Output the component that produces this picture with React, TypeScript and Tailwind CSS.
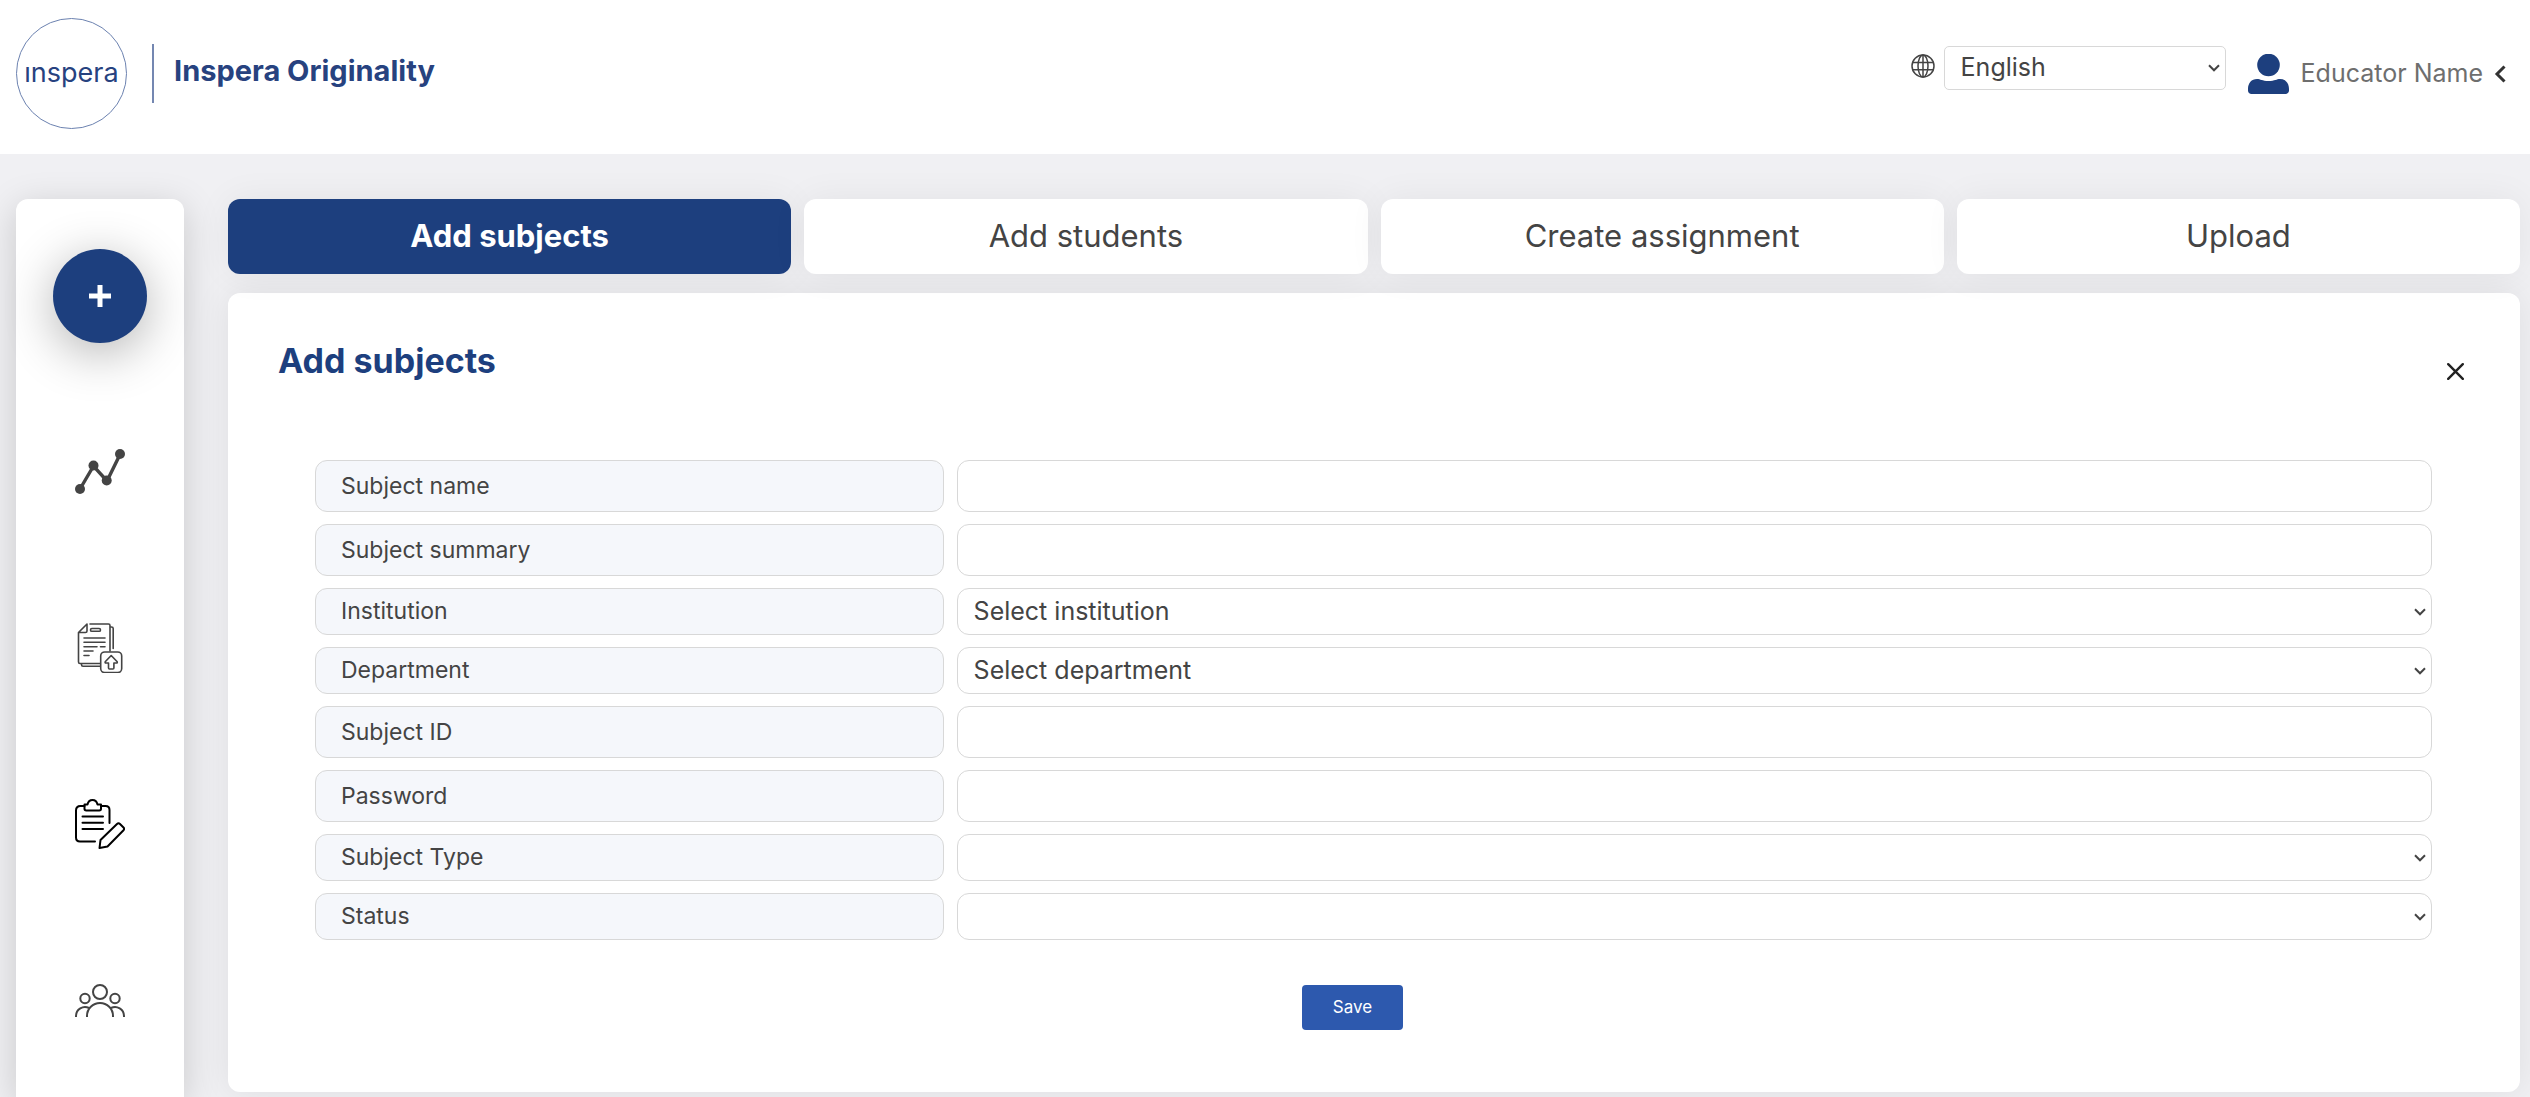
import type { ReactNode } from "react";

const tabs = ["Add subjects", "Add students", "Create assignment", "Upload"];

type Field = {
  id: string;
  label: string;
  type: "text" | "password" | "select";
  placeholder?: string;
};

const fields: Field[] = [
  { id: "name", label: "Subject name", type: "text" },
  { id: "summary", label: "Subject summary", type: "text" },
  { id: "institution", label: "Institution", type: "select", placeholder: "Select institution" },
  { id: "department", label: "Department", type: "select", placeholder: "Select department" },
  { id: "subject-id", label: "Subject ID", type: "text" },
  { id: "password", label: "Password", type: "password" },
  { id: "subject-type", label: "Subject Type", type: "select" },
  { id: "status", label: "Status", type: "select" },
];

function Logo() {
  return (
    <a href="#" className="flex items-center text-[#27427f]">
      <span className="flex size-[111px] items-center justify-center rounded-full border border-[#6c82b0] text-[27px]">
        ınspera
      </span>
      <span className="ml-[25px] h-[59px] w-[2px] bg-[#7487b1]"></span>
      <span className="ml-5 pb-1.5 text-[29px] font-bold">Inspera Originality</span>
    </a>
  );
}

function GlobeIcon() {
  return (
    <svg viewBox="0 0 24 24" className="size-6" fill="none" stroke="#444" strokeWidth="1.5">
      <circle cx="12" cy="12" r="11" />
      <ellipse cx="12" cy="12" rx="5" ry="11" />
      <path d="M12 1v22M1.600 8.500h20.800M1.600 15.800h20.800" />
    </svg>
  );
}

function UserIcon() {
  return (
    <svg viewBox="0 0 41 40" className="h-10 w-[41px]" fill="#1d3f7e">
      <circle cx="20.500" cy="11" r="11.300" />
      <path d="M0 35c0-6 3.500-10 9-10 3.500 0 5 2 11.500 2s8-2 11.500-2c5.500 0 9 4 9 10v1.500c0 2-1.500 3.500-3.500 3.500h-34C1.500 40 0 38.500 0 36.500z" />
    </svg>
  );
}

function ChartIcon() {
  return (
    <svg viewBox="0 0 50 50" className="size-[50px]" fill="#444">
      <path d="M5 42 18.500 19 32 34 45 7.500" fill="none" stroke="#444" strokeWidth="3.400" />
      <circle cx="5" cy="42" r="5" />
      <circle cx="18.500" cy="18.500" r="5" />
      <circle cx="31.700" cy="33.500" r="5" />
      <circle cx="45" cy="7" r="5" />
    </svg>
  );
}

function UploadDocIcon() {
  return (
    <svg viewBox="0 0 50 50" className="size-[50px]" fill="none" stroke="#444" strokeWidth="1.6" strokeLinecap="round" strokeLinejoin="round">
      <path d="M15 1h18.500q1.500 0 1.500 1.500V28M25 40.500H5q-1.500 0-1.500-1.500V9.500L12 1v7q0 1.500-1.500 1.500h-7" />
      <path d="M35.500 4h1q1.700 0 1.700 1.500v20M6.500 41v.8q0 1.400 1.500 1.400h17.500" />
      <rect x="15.500" y="5.500" width="10" height="2.800" rx="1.400" />
      <path d="M9 15h21M9 19.300h21M9 23.700h13M25.500 23.700H30M9 28h9M9 32.500h5" />
      <rect x="25.700" y="29" width="21" height="20.500" rx="4" fill="#fff" />
      <path d="m36.200 32.500-6 6.300q-.4 1.200.8 1.200h2.500v5q0 1 1 1h3.400q1 0 1-1v-5h2.500q1.200 0 .8-1.200z" />
    </svg>
  );
}

function ClipboardIcon() {
  return (
    <svg viewBox="0 0 50 50" className="size-[50px]" fill="none" stroke="#000" strokeWidth="2" strokeLinecap="round" strokeLinejoin="round">
      <path d="M9.500 7H5.500Q1 7 1 11.500v27Q1 42.500 5 42.500h15M26 7h4.500q4 0 4 4v13" />
      <path d="M9.500 5.500h3q1-4.500 5-4.500t5 4.500h3.500v4.300q0 1.700-1.700 1.700H11.200q-1.700 0-1.700-1.700z" />
      <path d="M7.500 17.500H28M7.500 23.800H28M7.500 30H28" />
      <path d="m24.500 49 1-8L42 25q1.500-1.500 3 0l3.500 3.500q1.300 1.300 0 2.700L32.500 47.500z" />
    </svg>
  );
}

function PeopleIcon() {
  return (
    <svg viewBox="0 0 50 50" className="size-[50px]" fill="none" stroke="#444" strokeWidth="2">
      <circle cx="25" cy="17" r="7" />
      <circle cx="10" cy="23.500" r="4.700" />
      <circle cx="40" cy="23.500" r="4.700" />
      <path d="M12 42v-1a13 13 0 0 1 26 0v1M1 42v-1a9 9 0 0 1 13-8M49 42v-1a9 9 0 0 0-13-8" />
    </svg>
  );
}

function NavItem({ label, children }: { label: string; children: ReactNode }) {
  return (
    <a href="#" aria-label={label} className="flex h-44 items-center justify-center">
      {children}
    </a>
  );
}

function Sidebar() {
  return (
    <nav className="w-[168px] shrink-0 rounded-t-xl bg-white pt-[9px] shadow-[0_8px_36px_rgba(0,0,0,0.17)]">
      <div className="flex h-44 items-center justify-center">
        <button
          type="button"
          aria-label="Add"
          className="flex size-[94px] items-center justify-center rounded-full bg-[#1d3f7e] shadow-[0_10px_50px_rgba(0,0,0,0.3)]"
        >
          <svg viewBox="0 0 22 22" className="size-[22px]" stroke="#fff" strokeWidth="5">
            <path d="M11 0v22M0 11h22" />
          </svg>
        </button>
      </div>
      <NavItem label="Reports"><ChartIcon /></NavItem>
      <NavItem label="Submissions"><UploadDocIcon /></NavItem>
      <NavItem label="Assignments"><ClipboardIcon /></NavItem>
      <NavItem label="Students"><PeopleIcon /></NavItem>
    </nav>
  );
}

// select without the browser arrow, with our own chevron over its right edge
function Select({ id, label, option, className }: { id: string; label?: string; option?: string; className: string }) {
  return (
    <div className="relative flex">
      <select
        id={id}
        aria-label={label}
        className={`w-full appearance-none border border-[#d8d8d8] bg-white pr-8 pl-4 text-[25px] text-[#444] ${className}`}
      >
        <option>{option}</option>
      </select>
      <svg
        viewBox="0 0 12 8"
        className="pointer-events-none absolute top-1/2 right-1.5 h-2 w-3 -translate-y-1/2"
        fill="none"
        stroke="#444"
        strokeWidth="2"
      >
        <path d="M1 1.300 6 6.300l5-5" />
      </svg>
    </div>
  );
}

function FieldRow({ field }: { field: Field }) {
  const isSelect = field.type === "select";
  return (
    <div className={`grid grid-cols-[628fr_1474fr] gap-[13px] ${isSelect ? "h-[47px]" : "h-[52px]"}`}>
      <label
        htmlFor={field.id}
        className="flex items-center rounded-xl border border-[#d8d8d8] bg-[#f5f7fb] pl-[25px] text-[23px] text-[#444]"
      >
        {field.label}
      </label>
      {isSelect ? (
        <Select id={field.id} option={field.placeholder} className="rounded-xl" />
      ) : (
        <input
          id={field.id}
          type={field.type}
          className="w-full rounded-xl border border-[#d8d8d8] bg-white px-4 text-[25px] text-[#444]"
        />
      )}
    </div>
  );
}

export default function App() {
  return (
    <div className="min-h-screen overflow-hidden bg-[#f0f0f3] font-['Inter',sans-serif] text-[#444]">
      <header className="flex h-[154px] items-start justify-between bg-white pt-[18px] pr-6 pl-4">
        <Logo />
        <div className="flex items-center pt-7">
          <div className="mr-[22px] flex items-center gap-[9px] pb-3">
            <span className="pb-1"><GlobeIcon /></span>
            <div className="w-[282px]">
              <Select id="language" label="Language" option="English" className="h-11 rounded-[5px]" />
            </div>
          </div>
          <button type="button" className="flex items-center text-[25px] text-[#6e6e6e]">
            <UserIcon />
            <span className="ml-3">Educator Name</span>
            <svg viewBox="0 0 12 18" className="ml-[11px] h-[18px] w-3" fill="none" stroke="#333" strokeWidth="3">
              <path d="M10.500 1.500 3 9l7.500 7.500" />
            </svg>
          </button>
        </div>
      </header>

      <div className="flex gap-11 pt-[45px] pr-[10px] pl-4">
        <Sidebar />
        <main className="flex-1 pb-[5px]">
          <div className="grid grid-cols-4 gap-[13px]">
            {tabs.map((tab, i) => (
              <button
                key={tab}
                type="button"
                className={`h-[75px] rounded-xl text-[31px] shadow-[0_0_36px_rgba(0,0,0,0.06)] ${
                  i === 0 ? "bg-[#1d3f7e] font-bold text-white" : "bg-white"
                }`}
              >
                {tab}
              </button>
            ))}
          </div>

          <section className="mt-[19px] rounded-xl bg-white pt-11 pb-[62px] shadow-[0_0_36px_rgba(0,0,0,0.08)]">
            <div className="flex h-[68px] justify-between pr-14 pl-[50px]">
              <h1 className="text-[34px] leading-[48px] font-bold text-[#1d3f7e]">Add subjects</h1>
              <button type="button" aria-label="Close" className="self-center">
                <svg viewBox="0 0 17 17" className="size-[17px]" stroke="#222" strokeWidth="2.400" strokeLinecap="round">
                  <path d="m1.200 1.200 14.600 14.600M15.800 1.200 1.200 15.800" />
                </svg>
              </button>
            </div>
            <form className="mt-[55px]">
              <div className="flex flex-col gap-3 pr-[88px] pl-[87px]">
                {fields.map((field) => (
                  <FieldRow key={field.id} field={field} />
                ))}
              </div>
              <div className="mt-[45px] flex justify-center pr-[43px]">
                <button type="button" className="h-[45px] w-[101px] rounded bg-[#2d59ae] text-[17px] text-white">
                  Save
                </button>
              </div>
            </form>
          </section>
        </main>
      </div>
    </div>
  );
}
